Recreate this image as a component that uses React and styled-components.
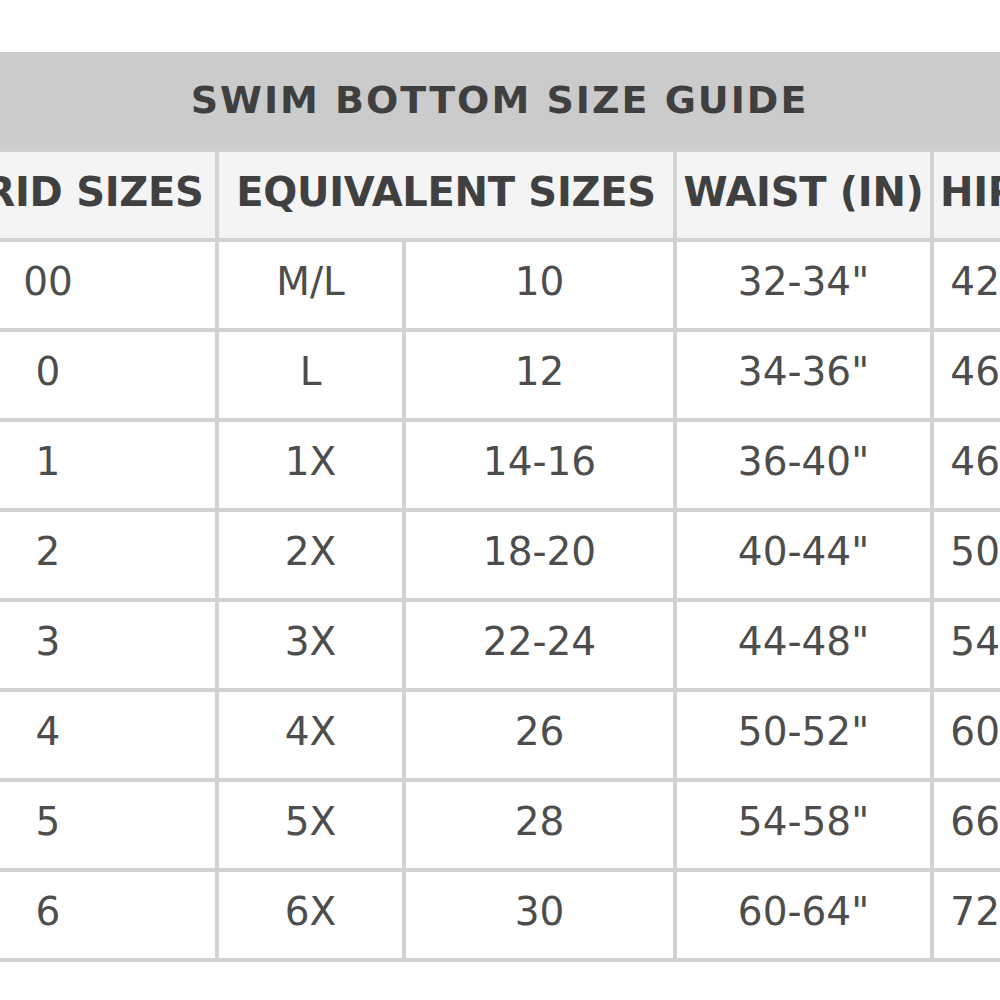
import React from 'react';
import styled, { createGlobalStyle } from 'styled-components';

const GlobalStyle = createGlobalStyle`
  html, body {
    margin: 0;
    padding: 0;
    background: #ffffff;
    overflow: hidden;
  }
  body {
    font-family: "DejaVu Sans", "Liberation Sans", sans-serif;
    color: #444444;
  }
`

const Page = styled.div`
  width: 100%;
  height: 1000px;
  overflow: hidden;
  padding-top: 52px;
  box-sizing: border-box;
`

// the guide is wider than the window, so it runs past both edges
const Guide = styled.div`
  display: grid;
  grid-template-columns: 338px 187px 271px 257px 168px;
  grid-template-rows: 100px 90px;
  grid-auto-rows: 90px;
  margin-left: -119px;
  width: max-content;
`

const Cell = styled.div`
  box-sizing: border-box;
  border-right: 4px solid #d2d2d2;
  border-bottom: 4px solid #d2d2d2;
  white-space: nowrap;
  overflow: visible;
  text-align: center;
`

const TitleCell = styled(Cell)`
  grid-column: 1 / -1;
  background: #cbcbcb;
  border-bottom-color: #cfcfcf;
  font-size: 38px;
  font-weight: 700;
  letter-spacing: 2px;
  line-height: 96px;
  padding-left: 20px;
  color: #3f3f3f;
`

const HeadCell = styled(Cell)`
  grid-column: span ${(p) => p.span || 1};
  background: #f4f4f4;
  font-size: 40px;
  font-weight: 700;
  letter-spacing: -0.3px;
  line-height: 80px;
  padding-left: ${(p) => (p.start ? '6px' : '0')};
  text-align: ${(p) => (p.start ? 'left' : 'center')};
  color: #404040;
`

const BodyCell = styled(Cell)`
  background: #ffffff;
  font-size: 39px;
  font-weight: 400;
  line-height: 79px;
  color: #4d4d4d;
`

const rows = [
  ['00', 'M/L', '10', '32-34"', '42-44"'],
  ['0', 'L', '12', '34-36"', '46-48"'],
  ['1', '1X', '14-16', '36-40"', '46-50"'],
  ['2', '2X', '18-20', '40-44"', '50-54"'],
  ['3', '3X', '22-24', '44-48"', '54-58"'],
  ['4', '4X', '26', '50-52"', '60-62"'],
  ['5', '5X', '28', '54-58"', '66-68"'],
  ['6', '6X', '30', '60-64"', '72-74"'],
];

export default function App() {
  return (
    <>
      <GlobalStyle />
      <Page>
        <Guide>
          <TitleCell>SWIM BOTTOM SIZE GUIDE</TitleCell>

          <HeadCell>HYBRID SIZES</HeadCell>
          <HeadCell span={2}>EQUIVALENT SIZES</HeadCell>
          <HeadCell>WAIST (IN)</HeadCell>
          <HeadCell start>HIPS (IN)</HeadCell>

          {rows.map((row, i) =>
            row.map((value, j) => <BodyCell key={`${i}-${j}`}>{value}</BodyCell>)
          )}
        </Guide>
      </Page>
    </>
  );
}
